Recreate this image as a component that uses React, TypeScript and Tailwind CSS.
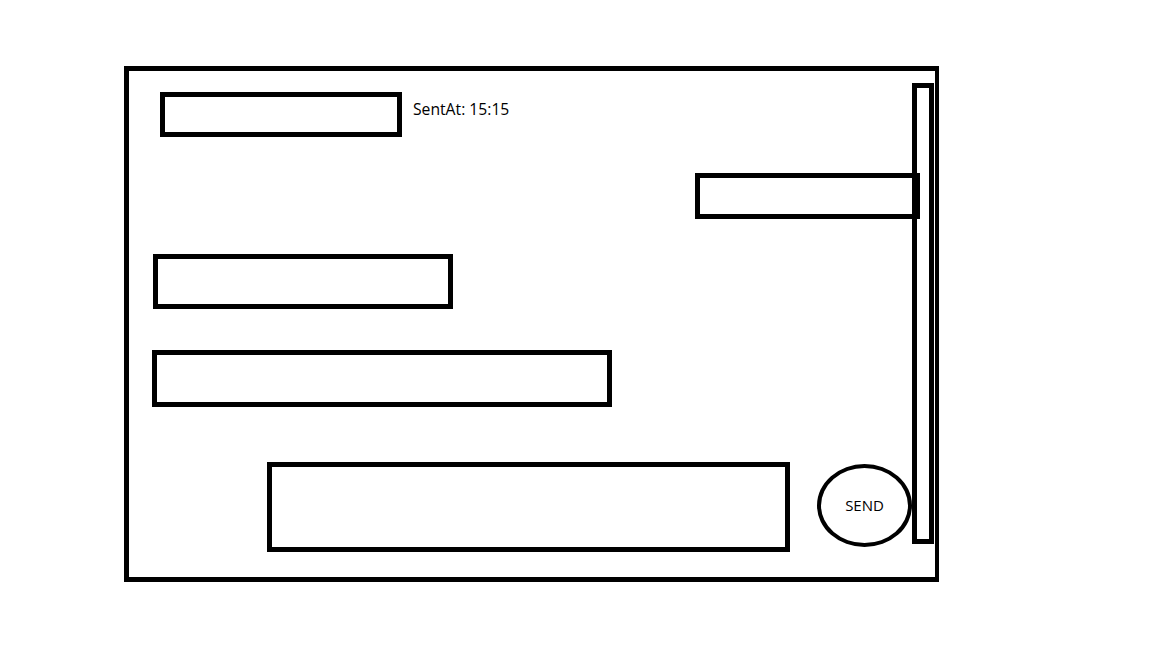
import React from 'react';

const Box: React.FC<{ className?: string }> = ({ className = '' }) => (
  <div className={`border-[5px] border-black shrink-0 ${className}`} />
);

const App: React.FC = () => {
  return (
    <div
      className="w-full h-[648px] bg-white pt-[66px] pl-[124px]"
      style={{ fontFamily: '"Open Sans", "Noto Sans", sans-serif' }}
    >
      <div className="w-[815px] h-[516px] border-[5px] border-r-[4px] border-black flex">
        {/* message list */}
        <div className="flex-1 flex flex-col">
          <div className="mt-[21px] ml-[31px] flex items-start">
            <Box className="w-[242px] h-[45px]" />
            <span className="ml-[11px] mt-[7px] text-[15.7px] leading-[20px] text-black">SentAt: 15:15</span>
          </div>

          <Box className="mt-[36px] self-end -mr-[8px] w-[225px] h-[46px]" />

          <Box className="mt-[35px] ml-[24px] w-[300px] h-[55px]" />

          <Box className="mt-[41px] ml-[23px] w-[460px] h-[57px]" />

          <div className="mt-[55px] flex items-start">
            <Box className="ml-[138px] w-[523px] h-[90px]" />
            <button className="ml-[27px] mt-[2px] w-[95px] h-[83px] shrink-0 rounded-[50%] border-[4px] border-black flex items-center justify-center text-[15px] text-black">
              SEND
            </button>
          </div>
        </div>

        {/* scrollbar */}
        <div className="mt-[12px] mr-[1px] w-[22px] h-[461px] border-[5px] border-black shrink-0" />
      </div>
    </div>
  );
};

export default App;
